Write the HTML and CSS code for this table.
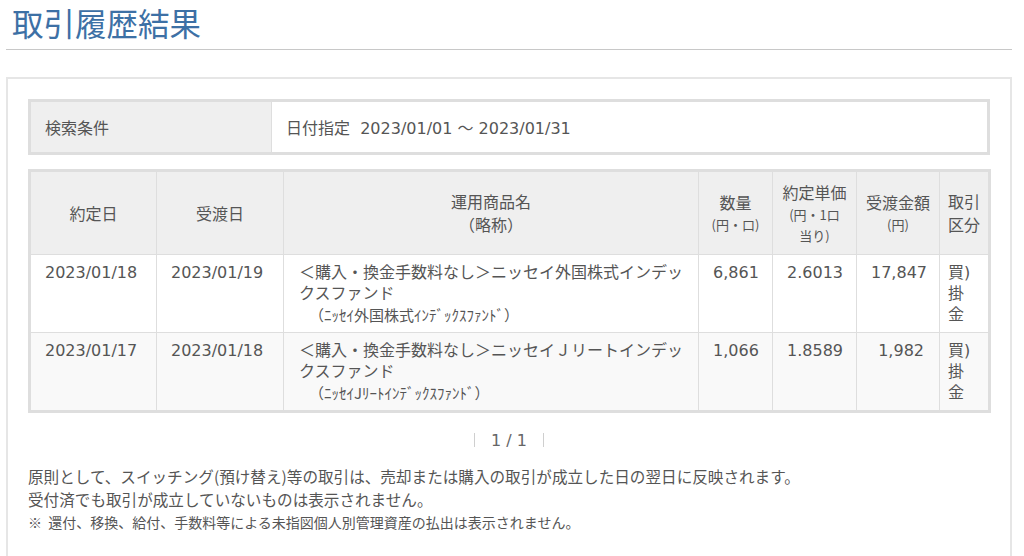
FILE: index.html
```html
<!DOCTYPE html>
<html lang="ja">
<head>
  <meta charset="UTF-8">
  <meta name="viewport" content="width=device-width, initial-scale=1.0">
  <title>取引履歴結果</title>
  <link rel="stylesheet" href="styles.css">
</head>
<body>
  <div class="page">
    <h1 class="page-title">取引履歴結果</h1>
    <div class="result-box">
      <table class="cond-table">
        <tr>
          <th>検索条件</th>
          <td>日付指定&nbsp;&nbsp;2023/01/01 〜 2023/01/31</td>
        </tr>
      </table>

      <table class="history-table">
        <colgroup>
          <col style="width:127px">
          <col style="width:127px">
          <col style="width:415px">
          <col style="width:74px">
          <col style="width:84px">
          <col style="width:83px">
          <col style="width:50px">
        </colgroup>
        <thead>
          <tr>
            <th>約定日</th>
            <th>受渡日</th>
            <th>運用商品名<br>（略称）</th>
            <th>数量<span class="sub">(円・口)</span></th>
            <th>約定単価<span class="sub">(円・1口<br>当り)</span></th>
            <th>受渡金額<span class="sub">(円)</span></th>
            <th>取引<br>区分</th>
          </tr>
        </thead>
        <tbody>
          <tr>
            <td>2023/01/18</td>
            <td>2023/01/19</td>
            <td class="name">＜購入・換金手数料なし＞ニッセイ外国株式インデックスファンド<span class="short">（ﾆｯｾｲ外国株式ｲﾝﾃﾞｯｸｽﾌｧﾝﾄﾞ）</span></td>
            <td class="num">6,861</td>
            <td class="num">2.6013</td>
            <td class="num">17,847</td>
            <td class="kind">買)掛金</td>
          </tr>
          <tr class="even">
            <td>2023/01/17</td>
            <td>2023/01/18</td>
            <td class="name">＜購入・換金手数料なし＞ニッセイＪリートインデックスファンド<span class="short">（ﾆｯｾｲJﾘｰﾄｲﾝﾃﾞｯｸｽﾌｧﾝﾄﾞ）</span></td>
            <td class="num">1,066</td>
            <td class="num">1.8589</td>
            <td class="num">1,982</td>
            <td class="kind">買)掛金</td>
          </tr>
        </tbody>
      </table>

      <div class="pager">
        <span class="pager-bar"></span>
        <span class="pager-text">1 / 1</span>
        <span class="pager-bar"></span>
      </div>

      <div class="notes">
        <p>原則として、スイッチング(預け替え)等の取引は、売却または購入の取引が成立した日の翌日に反映されます。</p>
        <p>受付済でも取引が成立していないものは表示されません。</p>
        <p class="small">※&nbsp;&nbsp;還付、移換、給付、手数料等による未指図個人別管理資産の払出は表示されません。</p>
      </div>
    </div>
  </div>
</body>
</html>
```

FILE: styles.css
```css
body {
  margin: 0;
  background: #fff;
  color: #555;
  font-family: 'Noto Sans CJK JP', 'Noto Sans', sans-serif;
}
.page {
  margin: 0 12px 0 6px;
}
.page-title {
  margin: 0;
  padding: 2px 6px 7px;
  font-size: 31.5px;
  font-weight: 400;
  line-height: 40px;
  color: #3d70a5;
  border-bottom: 1px solid #c8c8c8;
}
.result-box {
  margin-top: 27px;
  border: 2px solid #e6e6e6;
  border-bottom-width: 1px;
  padding: 20px 20px 22px;
}
.cond-table,
.history-table {
  width: 100%;
  border-collapse: collapse;
  border: 3px solid #dedede;
  font-size: 16px;
  font-family: 'DejaVu Sans', 'Noto Sans CJK JP', sans-serif;
}
.cond-table th,
.cond-table td {
  height: 50px;
  padding: 0 14px;
  text-align: left;
  font-weight: 400;
  border: 1px solid #dedede;
}
.cond-table th {
  width: 212px;
  background: #efefef;
  font-family: 'Noto Sans CJK JP', sans-serif;
}
.history-table {
  margin-top: 14px;
  table-layout: fixed;
}
.history-table th,
.history-table td {
  border: 1px solid #dedede;
}
.history-table th {
  height: 82px;
  padding: 0 4px;
  background: #efefef;
  font-weight: 400;
  line-height: 23px;
  text-align: center;
  font-family: 'Noto Sans CJK JP', sans-serif;
}
.history-table .sub {
  display: block;
  font-size: 13px;
  line-height: 21px;
}
.history-table td {
  height: 63px;
  padding: 7px 14px;
  line-height: 21px;
  vertical-align: top;
}
.history-table tr.even td {
  background: #f9f9f9;
}
.history-table td.name {
  padding: 7px 15px;
}
.history-table .short {
  display: block;
  padding-left: 10px;
  font-size: 15px;
  font-family: 'Noto Sans CJK JP', sans-serif;
}
.history-table td.num {
  padding-right: 15px;
  text-align: right;
}
.history-table td.kind {
  padding: 7px 10px 7px 8px;
}
.pager {
  display: flex;
  justify-content: center;
  align-items: center;
  gap: 14px;
  margin-top: 15px;
  height: 24px;
}
.pager-text {
  font-size: 16px;
  font-family: 'DejaVu Sans', sans-serif;
  color: #666;
  padding: 0 2px;
}
.pager-bar {
  width: 1px;
  height: 14px;
  background: #cfcfcf;
}
.notes {
  margin-top: 13px;
}
.notes p {
  margin: 0;
  font-size: 15.6px;
  line-height: 23px;
}
.notes p.small {
  font-size: 14px;
}
```
